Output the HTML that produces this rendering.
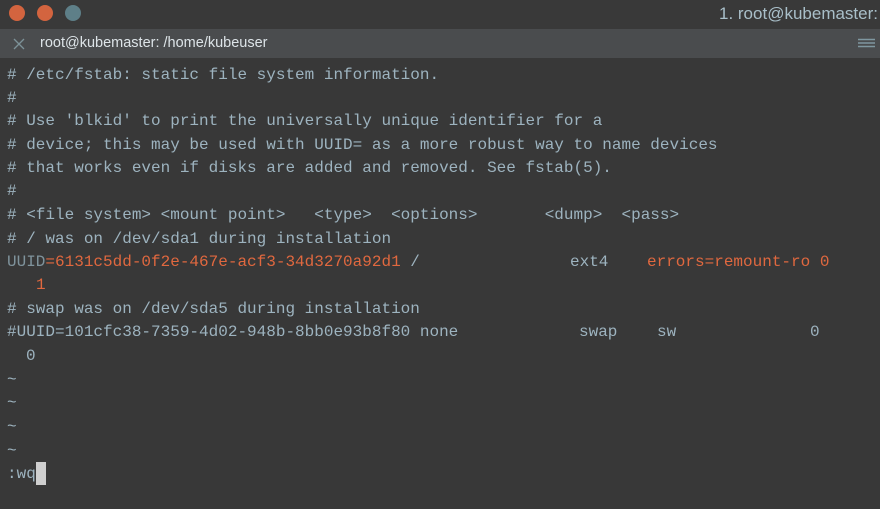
<!DOCTYPE html>
<html><head><style>
body{margin:0;width:880px;height:509px;background:#383838;overflow:hidden;position:relative;font-family:"Liberation Sans",sans-serif}
#tb{position:absolute;left:0;top:0;width:880px;height:29px;background:#393939}
.c{position:absolute;top:5px;width:16px;height:16px;border-radius:50%}
#tab{position:absolute;left:0;top:29px;width:880px;height:29px;background:#4a4c4e}
#t{position:absolute;top:0;left:0;font-family:"Liberation Mono",monospace;font-size:16px;color:#9db3bf}
.l{position:absolute;white-space:pre;line-height:20px}
.o{color:#e0683f}
.g{color:#7f939c}
</style></head><body>
<div id="tb">
<div class="c" style="left:9px;background:#d3643f"></div>
<div class="c" style="left:37px;background:#d3643f"></div>
<div class="c" style="left:65px;background:#5e7f88"></div>
<div style="position:absolute;right:2px;top:4px;font-size:17px;color:#a9bfc9">1. root@kubemaster:</div>
</div>
<div id="tab">
<svg style="position:absolute;left:13px;top:9px" width="12" height="12"><path d="M1 1L11 11M11 1L1 11" stroke="#7d9298" stroke-width="1.3"/></svg>
<div style="position:absolute;left:40px;top:6px;font-size:14.5px;color:#dde4e8">root@kubemaster: /home/kubeuser</div>
<svg style="position:absolute;left:858px;top:9px" width="17" height="12"><path d="M0 1.5H17M0 5H17M0 8.5H17" stroke="#7f97a0" stroke-width="1.6"/></svg>
</div>
<div id="t">
<div class="l" style="left:7px;top:65px"># /etc/fstab: static file system information.</div>
<div class="l" style="left:7px;top:88px">#</div>
<div class="l" style="left:7px;top:111px"># Use 'blkid' to print the universally unique identifier for a</div>
<div class="l" style="left:7px;top:135px"># device; this may be used with UUID= as a more robust way to name devices</div>
<div class="l" style="left:7px;top:158px"># that works even if disks are added and removed. See fstab(5).</div>
<div class="l" style="left:7px;top:181px">#</div>
<div class="l" style="left:7px;top:205px"># &lt;file system&gt; &lt;mount point&gt;   &lt;type&gt;  &lt;options&gt;       &lt;dump&gt;  &lt;pass&gt;</div>
<div class="l" style="left:7px;top:229px"># / was on /dev/sda1 during installation</div>
<div class="l" style="left:7px;top:252px"><span class="g">UUID</span><span class="o">=6131c5dd-0f2e-467e-acf3-34d3270a92d1</span> /</div>
<div class="l" style="left:570px;top:252px">ext4</div>
<div class="l o" style="left:647px;top:252px">errors=remount-ro 0</div>
<div class="l o" style="left:36px;top:275px">1</div>
<div class="l" style="left:7px;top:299px"># swap was on /dev/sda5 during installation</div>
<div class="l" style="left:7px;top:322px">#UUID=101cfc38-7359-4d02-948b-8bb0e93b8f80 none</div>
<div class="l" style="left:579px;top:322px">swap</div>
<div class="l" style="left:657px;top:322px">sw</div>
<div class="l" style="left:810px;top:322px">0</div>
<div class="l" style="left:26px;top:346px">0</div>
<div class="l" style="left:7px;top:370px">~</div>
<div class="l" style="left:7px;top:393px">~</div>
<div class="l" style="left:7px;top:417px">~</div>
<div class="l" style="left:7px;top:441px">~</div>
<div class="l" style="left:7px;top:464px">:wq</div>
<div style="position:absolute;left:36px;top:462px;width:10px;height:23px;background:#cfcfcf"></div>
</div>
</body></html>
